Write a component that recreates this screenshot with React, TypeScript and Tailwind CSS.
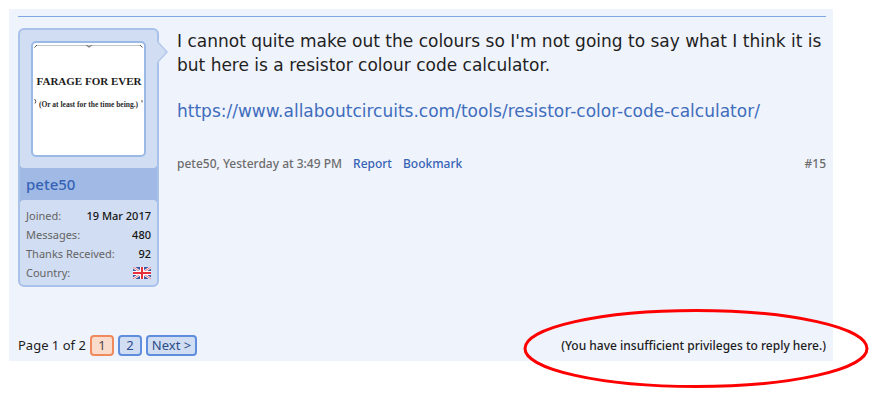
import React from "react";

const stats = [
  { label: "Joined:", value: "19 Mar 2017" },
  { label: "Messages:", value: "480" },
  { label: "Thanks Received:", value: "92" },
];

const Flag = () => (
  <svg
    viewBox="0 0 18 12"
    className="w-[18px] h-[12px]"
    role="img"
    aria-label="United Kingdom"
  >
    <rect width="18" height="12" fill="#3f56a3" />
    <path d="M0 0L18 12M18 0L0 12" stroke="#fff" strokeWidth="2.4" />
    <path d="M0 0L18 12M18 0L0 12" stroke="#e0525c" strokeWidth="0.8" />
    <path d="M9 0V12M0 6H18" stroke="#fff" strokeWidth="4" />
    <path d="M9 0V12M0 6H18" stroke="#e8303c" strokeWidth="2" />
  </svg>
);

const Avatar = () => (
  <a
    href="#pete50"
    className="block rounded-[5px] border-2 border-[#9bb9e6] bg-white overflow-hidden"
  >
    <svg
      viewBox="0 0 222 224"
      className="block w-full"
      fontFamily="'Liberation Serif', serif"
      fontWeight="700"
      textAnchor="middle"
    >
      <path d="M8 5H214" stroke="#c4c4c4" strokeWidth="2" />
      <path
        d="M3 9L8 4M214 4L219 9M107 4Q112 12 117 4"
        stroke="#555"
        strokeWidth="2"
        fill="none"
      />
      <text x="112" y="83" fontSize="22" fill="#1c1c1c">
        FARAGE FOR EVER
      </text>
      <text x="111" y="127" fontSize="15" fill="#2a2a2a">
        (Or at least for the time being.)
      </text>
      <path
        d="M3 112Q8 116 4 121M218 114V119"
        stroke="#555"
        strokeWidth="2"
        fill="none"
      />
    </svg>
  </a>
);

const UserCard = () => (
  <aside className="relative w-[141px] shrink-0 rounded-[6px] border-2 border-[#a9c2ea] bg-[#a0bae5]">
    <svg
      viewBox="0 0 12 22"
      className="absolute left-full top-[11px] w-[12px] h-[22px]"
      aria-hidden="true"
    >
      <path d="M-2 0L0 0L10 11L0 22H-2Z" fill="#d1ddf2" />
      <path d="M0 0L10 11L0 22" stroke="#b4c9ec" strokeWidth="1.5" fill="none" />
    </svg>
    <div className="rounded-[4px] bg-[#d1ddf2] px-[11px] py-[11px]">
      <Avatar />
    </div>
    <h3 className="px-[6px] text-[15px] leading-[32px] text-[#3563b5] font-medium">
      <a href="#pete50">pete50</a>
    </h3>
    <dl className="rounded-[4px] bg-[#d1ddf2] px-[6px] pt-[6px] pb-[3px] text-[11px] leading-[19px]">
      {stats.map((item) => (
        <div key={item.label} className="flex justify-between">
          <dt className="text-[#646464]">{item.label}</dt>
          <dd className="text-[#141414] font-medium">{item.value}</dd>
        </div>
      ))}
      <div className="flex items-center justify-between">
        <dt className="text-[#646464]">Country:</dt>
        <dd>
          <Flag />
        </dd>
      </div>
    </dl>
  </aside>
);

const Message = () => (
  <div className="flex-1 min-w-0 pt-px">
    <div className="text-[17px] leading-[24px] text-[#1f1f1f] font-['DejaVu_Sans',sans-serif]">
      <p>
        I cannot quite make out the colours so I'm not going to say what I think
        it is but here is a resistor colour code calculator.
      </p>
      <p className="mt-[22px]">
        <a
          href="https://www.allaboutcircuits.com/tools/resistor-color-code-calculator/"
          className="text-[#416dbd]"
        >
          https://www.allaboutcircuits.com/tools/resistor-color-code-calculator/
        </a>
      </p>
    </div>
    <div className="mt-[32px] flex gap-[11px] text-[12px] leading-[18px] font-medium text-[#6c6c6c]">
      <span>pete50, Yesterday at 3:49 PM</span>
      <a href="#report" className="text-[#3563b5]">
        Report
      </a>
      <a href="#bookmark" className="text-[#3563b5]">
        Bookmark
      </a>
      <a href="#post-15" className="ml-auto">
        #15
      </a>
    </div>
  </div>
);

const Pagination = () => (
  <nav className="flex items-center gap-[4px] text-[13px] leading-[17px] text-[#2a4c88]">
    <span className="text-[#1c1c1c]">Page 1 of 2</span>
    <a
      href="#page-1"
      aria-current="page"
      className="w-[24px] text-center rounded-[4px] border-2 border-[#f0895c] bg-[#fadccd] text-[#54464a]"
    >
      1
    </a>
    <a
      href="#page-2"
      className="w-[24px] text-center rounded-[4px] border-2 border-[#5f8fdc] bg-[#d1ddf2]"
    >
      2
    </a>
    <a
      href="#page-2"
      className="px-[4px] rounded-[4px] border-2 border-[#5f8fdc] bg-[#d1ddf2]"
    >
      Next &gt;
    </a>
  </nav>
);

const ReplyNotice = () => (
  <div className="relative">
    <p className="text-[12px] leading-[17px] font-medium text-[#1c1c1c]">
      (You have insufficient privileges to reply here.)
    </p>
    <svg
      viewBox="0 0 346 80"
      className="absolute -right-[43px] -top-[28px] w-[346px] h-[80px] max-w-none pointer-events-none"
      aria-hidden="true"
    >
      <ellipse
        cx="173"
        cy="39.5"
        rx="171"
        ry="38"
        fill="none"
        stroke="#fe0000"
        strokeWidth="3"
      />
    </svg>
  </div>
);

const App = () => {
  return (
    <div className="bg-white pt-[9px] pl-[9px] pr-[55px] pb-[45px] font-['Noto_Sans',sans-serif]">
      <main className="bg-[#eff3fc] pt-[7px] pl-[9px] pr-[7px] pb-[5px]">
        <article className="border-t border-[#7fa5e2] pt-[11px] flex items-start gap-[18px]">
          <UserCard />
          <Message />
        </article>
        <footer className="mt-[48px] flex items-center justify-between">
          <Pagination />
          <ReplyNotice />
        </footer>
      </main>
    </div>
  );
};

export default App;
